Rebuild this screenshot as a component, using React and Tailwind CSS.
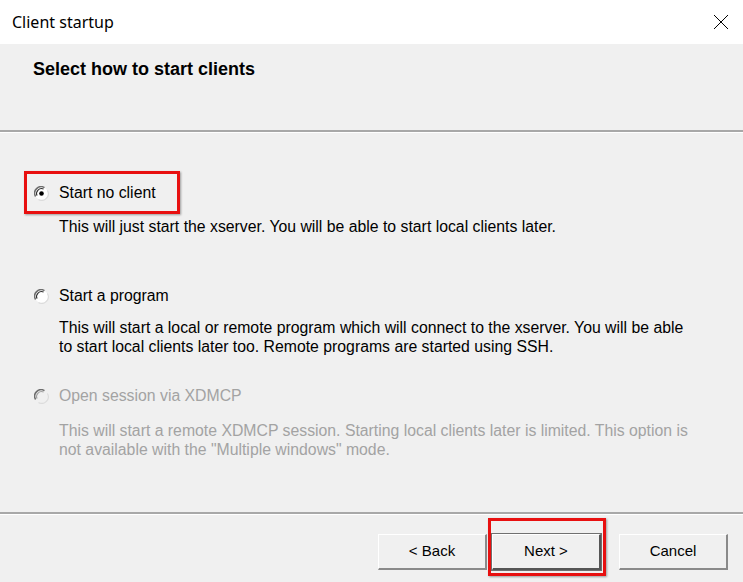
import React from 'react';

const font = { fontFamily: '"Liberation Sans", Arial, sans-serif' };

function Radio({ checked, disabled }) {
  return (
    <svg width="15" height="15" viewBox="0 0 15 15" className="shrink-0">
      <circle cx="7.5" cy="7.5" r="6.5" fill={disabled ? '#f0f0f0' : '#ffffff'} />
      <path d="M1.6 10.5 A6.5 6.5 0 0 1 10.5 1.6" fill="none" stroke="#6e6e6e" strokeWidth="1.5" />
      <path d="M3 9.6 A5 5 0 0 1 9.6 3" fill="none" stroke={disabled ? '#a0a0a0' : '#2e2e2e'} strokeWidth="1.1" />
      <path d="M13.4 4.5 A6.5 6.5 0 0 1 4.5 13.4" fill="none" stroke="#dcdcdc" strokeWidth="1.2" />
      {checked && <circle cx="7.5" cy="7.5" r="2.3" fill="#000" />}
    </svg>
  );
}

function Option({ label, lines, checked, disabled, highlight, top, gap }) {
  const color = disabled ? 'text-[#a3a3a3]' : 'text-black';
  return (
    <div className={top}>
      <div className="relative flex items-center h-[20px] pl-[34px] gap-[10px]">
        <Radio checked={checked} disabled={disabled} />
        <span className={`text-[15.8px] ${color}`}>{label}</span>
        {highlight && (
          <div className="absolute left-[24px] top-[-12px] w-[156px] h-[43px] border-[3px] border-[#e81010] shadow-[1px_1px_2px_rgba(0,0,0,0.35)]" />
        )}
      </div>
      <div className={`${gap} pl-[59px] text-[15.8px] leading-[19px] whitespace-nowrap ${color}`}>
        {lines.map((l, i) => (
          <div key={i}>{l}</div>
        ))}
      </div>
    </div>
  );
}

function Button({ children, isDefault, highlight }) {
  return (
    <div className="relative">
      <button
        className={`h-[36px] w-[109px] text-[15px] text-black bg-[#f0f0f0] border-t border-l border-t-white border-l-white border-b-2 border-r-2 ${
          isDefault ? 'border-b-[#555] border-r-[#555] outline outline-1 outline-[#707070]' : 'border-b-[#8a8a8a] border-r-[#8a8a8a]'
        }`}
      >
        {children}
      </button>
      {highlight && (
        <div className="absolute left-[-4px] top-[-16px] w-[118px] h-[58px] border-[3px] border-[#e81010] shadow-[1px_1px_2px_rgba(0,0,0,0.35)]" />
      )}
    </div>
  );
}

export default function App() {
  return (
    <div className="w-[743px] h-[582px] flex flex-col bg-[#f0f0f0] overflow-hidden" style={font}>
      <div className="h-[44px] bg-white flex items-center justify-between pl-[12px] pr-[14px] shrink-0">
        <span className="text-[16px] text-black" style={{ fontFamily: '"Noto Sans", "Liberation Sans", sans-serif' }}>
          Client startup
        </span>
        <svg width="16" height="16" viewBox="0 0 16 16">
          <path d="M1 1 L15 15 M15 1 L1 15" stroke="#000" strokeWidth="1" />
        </svg>
      </div>

      <div className="h-[86px] shrink-0 pl-[33px] pt-[15px]">
        <div className="text-[18px] font-bold text-black leading-[20px]">Select how to start clients</div>
      </div>
      <div className="h-[3px] shrink-0 border-t-2 border-b border-t-[#a8a8a8] border-b-white" />

      <div className="flex-1">
        <Option
          top="mt-[50px]"
          gap="mt-[14px]"
          checked
          highlight
          label="Start no client"
          lines={['This will just start the xserver. You will be able to start local clients later.']}
        />
        <Option
          top="mt-[50px]"
          gap="mt-[12px]"
          label="Start a program"
          lines={[
            'This will start a local or remote program which will connect to the xserver. You will be able',
            'to start local clients later too. Remote programs are started using SSH.',
          ]}
        />
        <Option
          top="mt-[30px]"
          gap="mt-[15px]"
          disabled
          label="Open session via XDMCP"
          lines={[
            'This will start a remote XDMCP session. Starting local clients later is limited. This option is',
            'not available with the "Multiple windows" mode.',
          ]}
        />
      </div>

      <div className="h-[3px] shrink-0 border-t-2 border-b border-t-[#a8a8a8] border-b-white" />
      <div className="h-[67px] shrink-0 flex items-start justify-end pt-[19px] pr-[15px]">
        <Button>&lt; Back</Button>
        <div className="w-[5px]" />
        <Button isDefault highlight>Next &gt;</Button>
        <div className="w-[18px]" />
        <Button>Cancel</Button>
      </div>
    </div>
  );
}
